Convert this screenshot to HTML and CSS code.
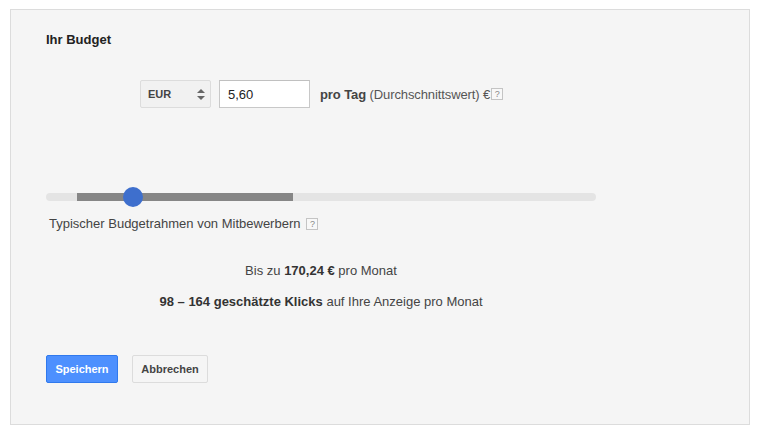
FILE: index.html
```html
<!DOCTYPE html>
<html lang="de">
<head>
<meta charset="utf-8">
<title>Ihr Budget</title>
<link rel="stylesheet" href="styles.css">
</head>
<body>
<div class="page">
  <div class="panel">
    <h1 class="title">Ihr Budget</h1>
    <div class="budget-row">
      <div class="select">
        <span class="select-text">EUR</span>
        <svg class="select-arrows" width="8" height="11" viewBox="0 0 8 11"><path d="M4 0 L8 4 H0 Z M0 7 H8 L4 11 Z" fill="#666"/></svg>
      </div>
      <div class="input">5,60</div>
      <div class="per-day"><b>pro Tag</b> (Durchschnittswert) €<span class="help">?</span></div>
    </div>
    <div class="slider-block">
      <div class="track">
        <div class="range"></div>
        <div class="thumb"></div>
      </div>
      <div class="slider-label">Typischer Budgetrahmen von Mitbewerbern <span class="help help-gap">?</span></div>
      <div class="summary">
        <p class="line1">Bis zu <b>170,24 €</b> pro Monat</p>
        <p class="line2"><b>98 – 164 geschätzte Klicks</b> auf Ihre Anzeige pro Monat</p>
      </div>
    </div>
    <div class="actions">
      <button class="btn btn-primary">Speichern</button>
      <button class="btn btn-default">Abbrechen</button>
    </div>
  </div>
</div>
</body>
</html>
```

FILE: styles.css
```css
* { box-sizing: border-box; }
html, body { margin: 0; background: #fff; }
body { font-family: Arial, "Liberation Sans", sans-serif; font-size: 13px; color: #333; }
.page { padding: 9px 7px 8px 10px; }
.panel {
  width: 740px;
  height: 416px;
  background: #f5f5f5;
  border: 1px solid #dcdcdc;
  padding: 22px 35px 0 35px;
}
.title { margin: 0; font-size: 13px; font-weight: bold; line-height: 16px; color: #222; }
.budget-row { display: flex; align-items: center; margin-top: 32px; padding-left: 94px; height: 28px; }
.select {
  width: 71px; height: 28px;
  background: #f1f1f1;
  border: 1px solid #dcdcdc;
  border-radius: 2px;
  display: flex; align-items: center; justify-content: space-between;
  padding: 0 5px 0 7px;
}
.select-text { font-size: 11px; font-weight: bold; color: #444; }
.input {
  width: 91px; height: 28px; margin-left: 8px;
  background: #fff;
  border: 1px solid #c8c8c8;
  border-top-color: #c0c0c0;
  padding: 0 8px;
  display: flex; align-items: center;
  font-size: 13px; color: #222;
}
.per-day { margin-left: 10px; color: #555; font-size: 13px; display: flex; align-items: center; white-space: pre; letter-spacing: -0.1px; }
.per-day b { color: #444; }
.help {
  display: inline-flex; align-items: center; justify-content: center;
  width: 12px; height: 12px;
  border: 1px solid #c4c4c4;
  background: #f8f8f8;
  color: #888; font-size: 9px; line-height: 1; letter-spacing: 0;
  margin-left: 1px;
}
.help-gap { margin-left: 6px; }
.slider-block { margin-top: 85px; width: 550px; }
.track { position: relative; height: 8px; background: #e4e4e4; border-radius: 4px; }
.range { position: absolute; left: 31px; width: 216px; top: 0; bottom: 0; background: #868686; }
.thumb { position: absolute; left: 77px; top: -6px; width: 20px; height: 20px; border-radius: 50%; background: #3e6fcd; }
.slider-label { margin-top: 15px; padding-left: 3px; line-height: 16px; color: #444; display: flex; align-items: center; }
.summary { text-align: center; margin-top: 31px; }
.summary p { margin: 0; line-height: 16px; font-size: 13px; color: #444; }
.summary .line2 { margin-top: 15px; }
.summary b { color: #333; }
.actions { margin-top: 45px; display: flex; gap: 14px; }
.btn {
  height: 28px; font-family: Arial, "Liberation Sans", sans-serif;
  font-size: 11px; font-weight: bold; border-radius: 2px; padding: 0 8px; cursor: pointer;
}
.btn-primary { width: 72px; background: #4d90fe; border: 1px solid #3079ed; color: #fff; }
.btn-default { width: 76px; background: #f5f5f5; border: 1px solid #dcdcdc; color: #444; }
```
